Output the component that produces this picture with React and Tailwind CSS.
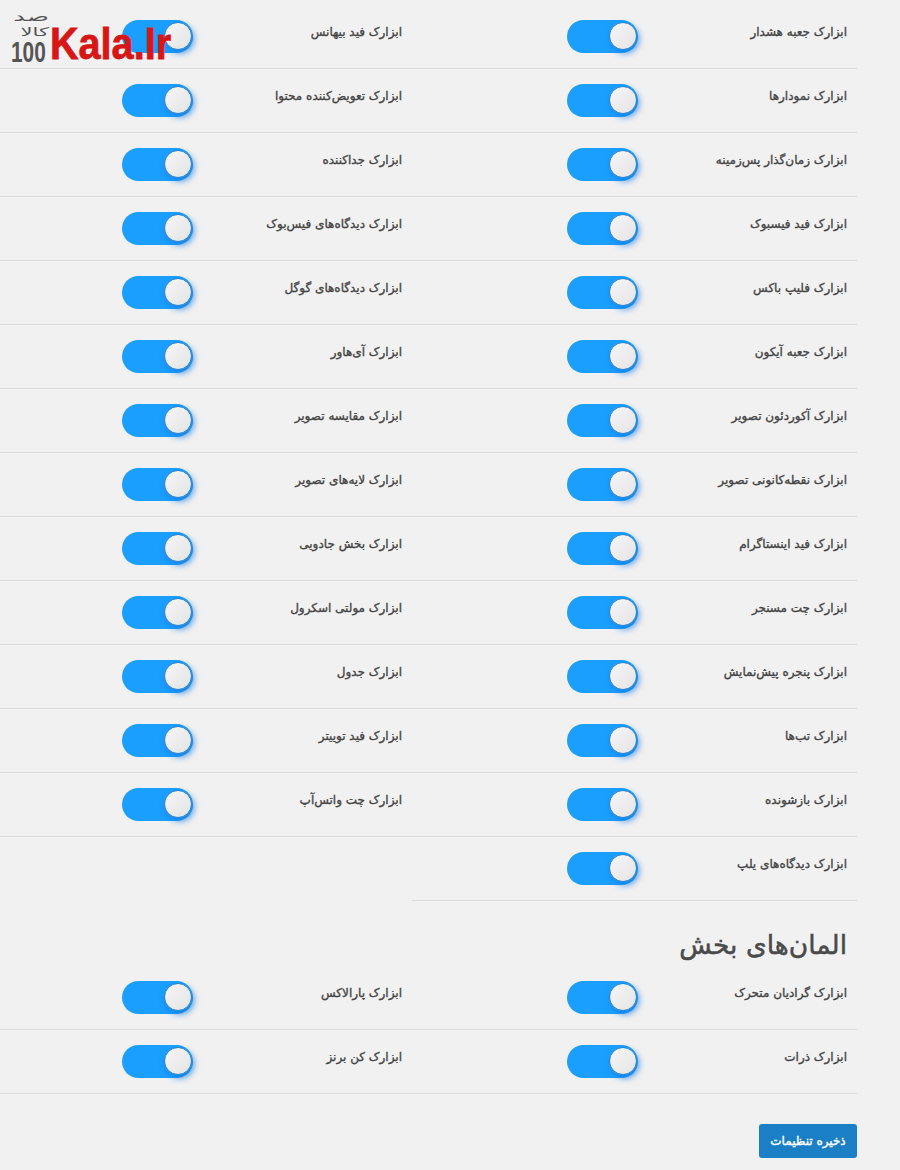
import React from "react";

const widgets = [
  "ابزارک جعبه هشدار", "ابزارک فید بیهانس",
  "ابزارک نمودارها", "ابزارک تعویض‌کننده محتوا",
  "ابزارک زمان‌گذار پس‌زمینه", "ابزارک جداکننده",
  "ابزارک فید فیسبوک", "ابزارک دیدگاه‌های فیس‌بوک",
  "ابزارک فلیپ باکس", "ابزارک دیدگاه‌های گوگل",
  "ابزارک جعبه آیکون", "ابزارک آی‌هاور",
  "ابزارک آکوردئون تصویر", "ابزارک مقایسه تصویر",
  "ابزارک نقطه‌کانونی تصویر", "ابزارک لایه‌های تصویر",
  "ابزارک فید اینستاگرام", "ابزارک بخش جادویی",
  "ابزارک چت مسنجر", "ابزارک مولتی اسکرول",
  "ابزارک پنجره پیش‌نمایش", "ابزارک جدول",
  "ابزارک تب‌ها", "ابزارک فید توییتر",
  "ابزارک بازشونده", "ابزارک چت واتس‌آپ",
  "ابزارک دیدگاه‌های یلپ",
];

const sectionWidgets = [
  "ابزارک گرادیان متحرک", "ابزارک پارالاکس",
  "ابزارک ذرات", "ابزارک کن برنز",
];

function Toggle() {
  return (
    <div className="w-[71px] h-[33px] rounded-full bg-[#1a9fff] flex items-center justify-start pr-[1px] pb-[1px]">
      <div className="w-[28px] h-[28px] rounded-full border border-[#2f86c8] bg-gradient-to-br from-[#f6f6f6] to-[#e4e4e4] shadow-[2px_3px_6px_rgba(20,120,220,0.75)]" />
    </div>
  );
}

function Row({ label }) {
  return (
    <div className="h-[64px] border-b border-[#dcdcdc] flex items-start">
      <div className="w-[219px] pr-[10px] pt-[17px] text-[12px] leading-[20px] font-normal text-[#444] [-webkit-text-stroke:0.35px_#444]">
        {label}
      </div>
      <div className="pt-[15px]">
        <Toggle />
      </div>
    </div>
  );
}

// watermark sitting on top of the first row
function Logo() {
  return (
    <div dir="ltr" className="absolute left-[11px] top-[9px] flex items-end gap-[1px] pointer-events-none">
      <div className="w-[38px] flex flex-col text-[#555]">
        <div dir="rtl" className="h-[16px] text-[13px] leading-[15px] origin-right scale-x-[2]">
          صد
        </div>
        <div dir="rtl" className="h-[14px] text-[12px] leading-[14px] origin-right scale-x-[1.75]">
          کالا
        </div>
        <div className="h-[26px] pt-[3px] text-[29px] leading-[21px] font-bold font-['Liberation_Sans'] origin-left scale-x-[0.72] whitespace-nowrap">
          100
        </div>
      </div>
      <div className="text-[#d71616] text-[45px] leading-[42px] font-bold font-['Liberation_Sans'] origin-left scale-x-[0.88] whitespace-nowrap [-webkit-text-stroke:0.8px_#d71616]">
        Kala.Ir
      </div>
    </div>
  );
}

export default function App() {
  return (
    <div className="relative w-[900px] h-[1170px] overflow-hidden bg-[#f1f1f1] font-['DejaVu_Sans',sans-serif]">
      <div dir="rtl" className="w-[857px] pt-[5px]">
        <div className="grid grid-cols-[445px_412px]">
          {widgets.map((w) => (
            <Row key={w} label={w} />
          ))}
        </div>

        <h2 className="mt-[27px] h-[38px] pr-[10px] text-[26.5px] leading-[34px] font-normal text-[#4a4a4a] [-webkit-text-stroke:0.5px_#4a4a4a]">
          المان‌های بخش
        </h2>

        <div className="grid grid-cols-[445px_412px]">
          {sectionWidgets.map((w) => (
            <Row key={w} label={w} />
          ))}
        </div>

        <div className="mt-[30px]">
          <button className="w-[98px] h-[34px] rounded-[3px] bg-[#1a7fc4] text-white text-[12px] font-normal [-webkit-text-stroke:0.4px_#ffffff]">
            ذخیره تنظیمات
          </button>
        </div>
      </div>

      <Logo />
    </div>
  );
}
